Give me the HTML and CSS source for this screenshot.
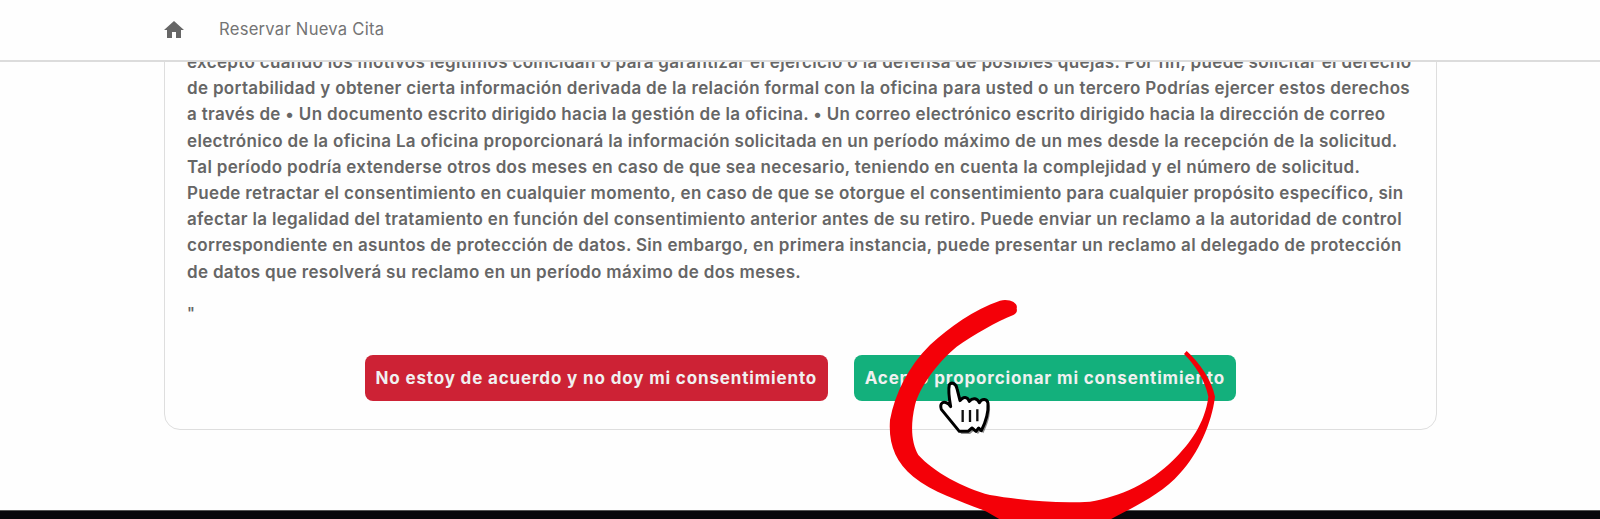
FILE: index.html
```html
<!DOCTYPE html>
<html lang="es">
<head>
<meta charset="utf-8">
<title>Reservar Nueva Cita</title>
<link rel="stylesheet" href="styles.css">
</head>
<body>
<div class="page">
  <header class="nav">
    <svg class="home" viewBox="2 3 20 17"><path d="M10 20v-6h4v6h5v-8h3L12 3 2 12h3v8z"/></svg>
    <span class="nav-link">Reservar Nueva Cita</span>
  </header>
  <main class="main">
    <section class="card">
      <p class="legal">excepto cuando los motivos legítimos coincidan o para garantizar el ejercicio o la defensa de posibles quejas. Por fin, puede solicitar el derecho<br>de portabilidad y obtener cierta información derivada de la relación formal con la oficina para usted o un tercero Podrías ejercer estos derechos<br>a través de • Un documento escrito dirigido hacia la gestión de la oficina. • Un correo electrónico escrito dirigido hacia la dirección de correo<br>electrónico de la oficina La oficina proporcionará la información solicitada en un período máximo de un mes desde la recepción de la solicitud.<br>Tal período podría extenderse otros dos meses en caso de que sea necesario, teniendo en cuenta la complejidad y el número de solicitud.<br>Puede retractar el consentimiento en cualquier momento, en caso de que se otorgue el consentimiento para cualquier propósito específico, sin<br>afectar la legalidad del tratamiento en función del consentimiento anterior antes de su retiro. Puede enviar un reclamo a la autoridad de control<br>correspondiente en asuntos de protección de datos. Sin embargo, en primera instancia, puede presentar un reclamo al delegado de protección<br>de datos que resolverá su reclamo en un período máximo de dos meses.</p>
      <p class="quote">"</p>
      <div class="actions">
        <button class="btn btn-red">No estoy de acuerdo y no doy mi consentimiento</button>
        <button class="btn btn-green">Acepto proporcionar mi consentimiento</button>
      </div>
    </section>
  </main>
  <div class="footer"></div>
</div>
<svg class="scribble" viewBox="0 0 1200 717"><path d="M530 85C535 70 510 55 480 62C400 90 330 140 270 195C205 260 165 340 150 420C145 490 165 545 220 590C280 640 370 665 440 695L500 730L790 730C860 690 960 650 1020 580C1075 520 1115 430 1125 350C1115 300 1080 250 1040 213L1032 222C1065 255 1095 300 1105 350C1095 430 1050 490 1000 540C930 610 840 650 750 665C650 672 540 660 450 645C370 625 280 575 235 525C215 490 210 440 225 375C240 320 290 250 350 200C400 165 470 125 520 105C530 100 532 95 530 85Z"/></svg>
<svg class="hand" viewBox="0 0 300 240">
  <path class="hand-shadow" d="M148 74C156 64 168 72 171 86L180 122C190 108 202 110 208 124C218 112 232 114 238 128C246 114 262 116 264 130C266 160 256 188 244 212L236 204L228 214L216 204L204 214L178 214C160 192 142 170 124 148C118 130 130 120 146 132L152 140C148 118 144 92 148 74Z"/>
  <path class="hand-fill" d="M148 74C156 64 168 72 171 86L180 122C190 108 202 110 208 124C218 112 232 114 238 128C246 114 262 116 264 130C266 160 256 188 244 212L236 204L228 214L216 204L204 214L178 214C160 192 142 170 124 148C118 130 130 120 146 132L152 140C148 118 144 92 148 74Z"/>
  <path class="hand-lines" d="M188 150V186M210 150V186M232 148V184"/>
</svg>
</body>
</html>
```
FILE: styles.css
```css
* { box-sizing: border-box; }
html, body { margin: 0; height: 519px; overflow: hidden; background: #fefefe; }
body { font-family: Inter, "Liberation Sans", sans-serif; color: #666; }
.page { display: flex; flex-direction: column; height: 519px; }
.nav {
  position: relative; z-index: 1;
  flex: none; height: 62px;
  display: flex; align-items: center; gap: 35px;
  padding: 0 0 2px 164px;
  background: #fefefe;
  border-bottom: 2px solid #dcdcdc;
}
.home { width: 20px; height: 17px; fill: #666; }
.nav-link { font-size: 16.6px; letter-spacing: 0.26px; color: #747474; }
.main { flex: 1; padding: 0 163px 0 164px; }
.card {
  margin-top: -33px;
  padding: 19px 22px 28px;
  height: 401px;
  border: 1px solid #dedede;
  border-radius: 16px;
}
.legal { margin: 0; font-size: 17px; letter-spacing: 0.33px; line-height: 26.2px; font-weight: 600; white-space: nowrap; }
.quote { margin: 15px 0 0; font-size: 15px; line-height: 26px; font-weight: 600; }
.actions { display: flex; justify-content: center; gap: 26px; margin-top: 29px; }
.btn {
  height: 46px; padding: 0 10.5px;
  border: 0; border-radius: 8px;
  font: 700 17px Inter, "Liberation Sans", sans-serif;
  letter-spacing: 0.85px;
  color: #f0f0f0; white-space: nowrap;
}
.btn-red { background: #cd2235; }
.btn-green { background: #13b07c; padding: 0 11px; }
.footer { flex: none; height: 9px; background: #08080c; border-top: 1px solid #555; }
.scribble { position: absolute; left: 840px; top: 280px; width: 400px; height: 239px; fill: #f40008; overflow: hidden; }
.hand { position: absolute; left: 900px; top: 360px; width: 100px; height: 80px; }
.hand-shadow { fill: #333; transform: translate(6px, 8px); opacity: .55; }
.hand-fill { fill: #fff; stroke: #000; stroke-width: 9; stroke-linejoin: round; }
.hand-lines { fill: none; stroke: #111; stroke-width: 7; }
```
